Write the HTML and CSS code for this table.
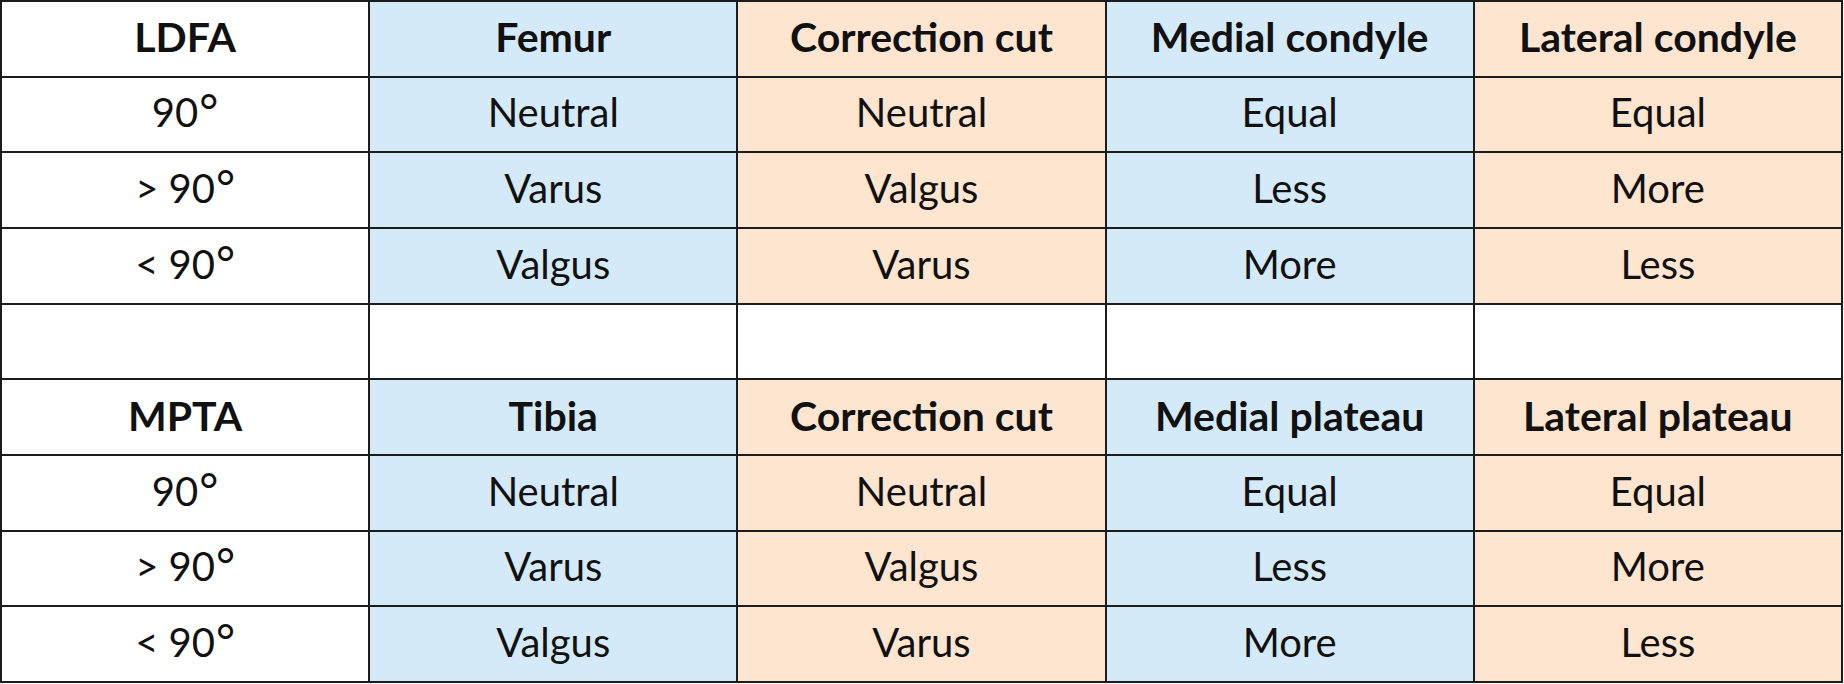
FILE: index.html
```html
<!DOCTYPE html>
<html>
<head>
<meta charset="utf-8">
<link rel="stylesheet" href="styles.css">
</head>
<body>
<table class="grid">
  <colgroup><col><col><col><col><col></colgroup>
  <tr class="head">
    <td class="w">LDFA</td><td class="b">Femur</td><td class="p">Correction cut</td><td class="b">Medial condyle</td><td class="p">Lateral condyle</td>
  </tr>
  <tr><td class="w">90<span class="deg">°</span></td><td class="b">Neutral</td><td class="p">Neutral</td><td class="b">Equal</td><td class="p">Equal</td></tr>
  <tr><td class="w">&gt; 90<span class="deg">°</span></td><td class="b">Varus</td><td class="p">Valgus</td><td class="b">Less</td><td class="p">More</td></tr>
  <tr><td class="w">&lt; 90<span class="deg">°</span></td><td class="b">Valgus</td><td class="p">Varus</td><td class="b">More</td><td class="p">Less</td></tr>
  <tr><td class="w"></td><td class="w"></td><td class="w"></td><td class="w"></td><td class="w"></td></tr>
  <tr class="head">
    <td class="w">MPTA</td><td class="b">Tibia</td><td class="p">Correction cut</td><td class="b">Medial plateau</td><td class="p">Lateral plateau</td>
  </tr>
  <tr><td class="w">90<span class="deg">°</span></td><td class="b">Neutral</td><td class="p">Neutral</td><td class="b">Equal</td><td class="p">Equal</td></tr>
  <tr><td class="w">&gt; 90<span class="deg">°</span></td><td class="b">Varus</td><td class="p">Valgus</td><td class="b">Less</td><td class="p">More</td></tr>
  <tr><td class="w">&lt; 90<span class="deg">°</span></td><td class="b">Valgus</td><td class="p">Varus</td><td class="b">More</td><td class="p">Less</td></tr>
</table>
</body>
</html>
```

FILE: styles.css
```css
html, body {
  margin: 0;
  padding: 0;
  background: #ffffff;
}
.grid {
  width: 1843px;
  height: 683px;
  border-collapse: collapse;
  table-layout: fixed;
  font-family: "Lato", "Liberation Sans", sans-serif;
  font-size: 40px;
  color: #111111;
}
.grid col {
  width: 20%;
}
.grid tr {
  height: 75px;
}
.grid td {
  border: 2px solid #1c1c1c;
  text-align: center;
  vertical-align: middle;
  padding: 0 0 4px 0;
  line-height: 1;
  overflow: hidden;
}
.grid .head td {
  font-weight: 700;
  font-size: 41px;
}
.deg {
  font-size: 1.15em;
  font-weight: 400;
  line-height: 0;
  vertical-align: -0.02em;
  margin-left: 1px;
}
.w { background: #ffffff; }
.b { background: #d4eaf9; }
.p { background: #fde5d0; }
```
